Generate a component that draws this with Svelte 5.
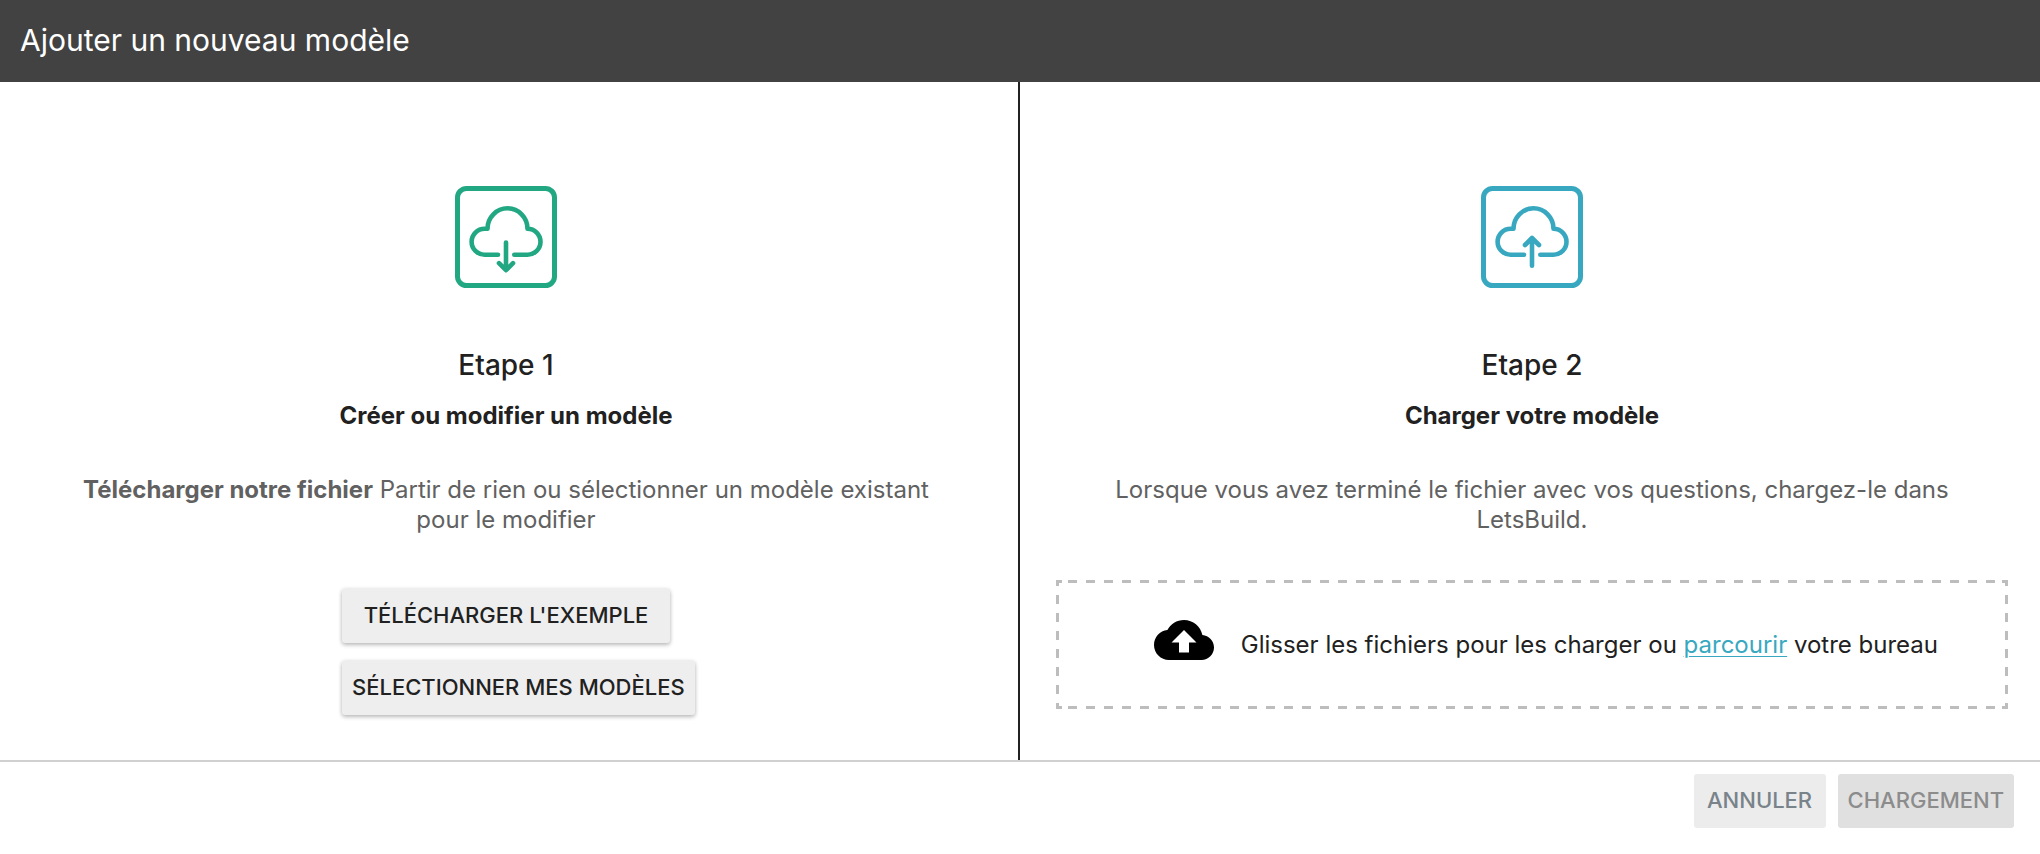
<script lang="ts">
	let fileInput: HTMLInputElement;

	// nothing to upload until a file has been picked
	let files = $state<FileList | null>(null);
	let canUpload = $derived(!!files && files.length > 0);

	function browse(event: MouseEvent) {
		event.preventDefault();
		fileInput.click();
	}

	function handleDrop(event: DragEvent) {
		event.preventDefault();
		files = event.dataTransfer?.files ?? null;
	}
</script>

{#snippet cloud(direction: 'down' | 'up')}
	<svg class="step-icon step-icon--{direction}" viewBox="0 0 102 102" aria-hidden="true">
		<rect x="2.5" y="2.5" width="97" height="97" rx="9" stroke-width="5" />
		<path d="M43 68.7H29.6a13 13 0 0 1 0-26h2.9a20 20.4 0 0 1 40 0a13 13 0 0 1 0 26H59.3" />
		{#if direction === 'down'}
			<path d="M51 56.5V84M44 77.2l7 7l7-7" />
		{:else}
			<path d="M51 79.7V52.5M44 59l7-7l7 7" />
		{/if}
	</svg>
{/snippet}

<div class="dialog">
	<header>
		<h1>Ajouter un nouveau modèle</h1>
	</header>

	<main>
		<section class="step step--create">
			{@render cloud('down')}
			<h2>Etape 1</h2>
			<h3>Créer ou modifier un modèle</h3>
			<p class="description">
				<strong>Télécharger notre fichier</strong> Partir de rien ou sélectionner un modèle existant pour
				le modifier
			</p>
			<div class="actions">
				<button class="btn btn--raised">TÉLÉCHARGER L'EXEMPLE</button>
				<button class="btn btn--raised">SÉLECTIONNER MES MODÈLES</button>
			</div>
		</section>

		<section class="step step--upload">
			{@render cloud('up')}
			<h2>Etape 2</h2>
			<h3>Charger votre modèle</h3>
			<p class="description">
				Lorsque vous avez terminé le fichier avec vos questions, chargez-le dans LetsBuild.
			</p>
			<div
				class="dropzone"
				role="group"
				aria-label="Zone de dépôt"
				ondragover={(event) => event.preventDefault()}
				ondrop={handleDrop}
			>
				<svg class="upload-icon" viewBox="0 0 24 24" aria-hidden="true">
					<path
						d="M19.35 10.04C18.67 6.59 15.64 4 12 4 9.11 4 6.6 5.64 5.35 8.04 2.34 8.36 0 10.91 0 14c0 3.31 2.69 6 6 6h13c2.76 0 5-2.24 5-5 0-2.64-2.05-4.78-4.65-4.96zM14 13v4h-4v-4H7l5-5 5 5h-3z"
					/>
				</svg>
				<p>
					Glisser les fichiers pour les charger ou <a href="#parcourir" onclick={browse}>parcourir</a>
					votre bureau
				</p>
				<input type="file" bind:this={fileInput} bind:files aria-label="Fichier du modèle" hidden />
			</div>
		</section>
	</main>

	<footer>
		<button class="btn btn--cancel">ANNULER</button>
		<button class="btn btn--submit" disabled={!canUpload}>CHARGEMENT</button>
	</footer>
</div>

<style>
	:global(body) {
		margin: 0;
		background: #fff;
	}

	.dialog {
		font-family: Inter, 'Liberation Sans', sans-serif;
		font-size: 24px;
		font-weight: 400;
		line-height: 30px;
		color: #212121;
	}

	h1,
	h2,
	h3,
	p {
		margin: 0;
	}

	header {
		padding: 19px 20px 21px;
		background: #424242;
		color: #fff;
	}

	h1 {
		font-size: 30px;
		font-weight: 400;
		line-height: 42px;
	}

	main {
		display: grid;
		grid-template-columns: 1fr 1fr;
	}

	.step {
		display: flex;
		flex-direction: column;
		align-items: center;
		padding: 104px 32px 45px 36px;
		text-align: center;
	}

	.step--create {
		padding: 104px 36px 45px 30px;
		border-right: 2px solid #212121;
	}

	.step-icon {
		width: 102px;
		height: 102px;
		fill: none;
		stroke-width: 4.6;
		stroke-linecap: round;
		stroke-linejoin: round;
	}

	.step-icon--down {
		stroke: #22a783;
	}

	.step-icon--up {
		stroke: #38a8c0;
	}

	h2 {
		margin-top: 59px;
		font-size: 28px;
		font-weight: 500;
		line-height: 36px;
	}

	h3 {
		margin-top: 18px;
		font-size: 24px;
		font-weight: 700;
	}

	.description {
		margin-top: 44px;
		padding: 0 30px;
		color: #616161;
	}

	.description strong {
		font-weight: 700;
	}

	/* the second label is wider than this column and runs past its right edge */
	.actions {
		display: flex;
		flex-direction: column;
		align-items: flex-start;
		gap: 18px;
		width: 328px;
		margin-top: 54px;
	}

	.btn {
		padding: 11px 10px 13px;
		border: 0;
		border-radius: 3px;
		background: #eee;
		color: #212121;
		font-family: inherit;
		font-size: 22px;
		font-weight: 500;
		line-height: 30px;
		white-space: nowrap;
		cursor: pointer;
	}

	.btn--raised {
		min-width: 100%;
		box-shadow:
			0 2px 4px rgba(0, 0, 0, 0.24),
			0 0 4px rgba(0, 0, 0, 0.1);
	}

	/* long dashes, drawn as one strip per side plus the corner pieces */
	.dropzone {
		--dash: #bdbdbd;
		--across: linear-gradient(90deg, var(--dash) 50%, transparent 50%);
		--down: linear-gradient(var(--dash) 50%, transparent 50%);
		--corner: linear-gradient(var(--dash), var(--dash));
		box-sizing: border-box;
		display: flex;
		align-items: center;
		justify-content: space-between;
		width: 100%;
		min-height: 129px;
		margin-top: 45px;
		padding: 0 70px 0 98px;
		background:
			var(--corner) left top / 6px 3px no-repeat,
			var(--corner) right top / 6px 3px no-repeat,
			var(--corner) left bottom / 6px 3px no-repeat,
			var(--corner) right bottom / 6px 3px no-repeat,
			var(--across) 12px 0 / 18px 3px repeat-x,
			var(--across) 12px 100% / 18px 3px repeat-x,
			var(--down) 0 -3px / 3px 18px repeat-y,
			var(--down) 100% -3px / 3px 18px repeat-y;
	}

	.dropzone a {
		color: #38a8c0;
		text-decoration-thickness: 1px;
		text-underline-offset: 3px;
	}

	.upload-icon {
		flex: none;
		width: 60px;
		height: 60px;
		padding-bottom: 9px;
	}

	footer {
		display: flex;
		justify-content: flex-end;
		gap: 12px;
		padding: 12px 26px 26px;
		border-top: 2px solid #d0d0d0;
	}

	.btn--cancel {
		min-width: 132px;
		background: #ececec;
		color: #78838a;
	}

	.btn--submit {
		background: #e0e0e0;
		color: #212121;
	}

	.btn--submit:disabled {
		color: #8c8c8c;
		cursor: default;
	}
</style>
